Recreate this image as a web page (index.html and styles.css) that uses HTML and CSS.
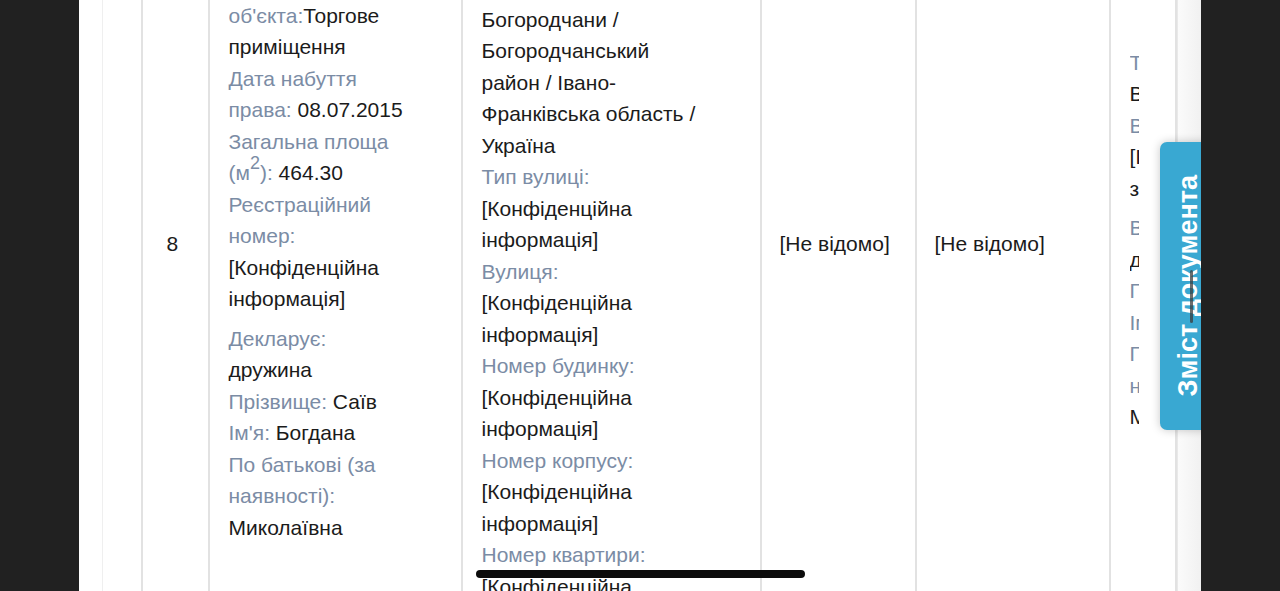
FILE: index.html
```html
<!DOCTYPE html>
<html lang="uk">
<head>
<meta charset="utf-8">
<title>Декларація — об'єкти нерухомості</title>
<link rel="stylesheet" href="styles.css">
</head>
<body>
<div class="frame">
  <div class="page">
    <div class="scroller">
      <table class="decl">
        <colgroup>
          <col class="c-gap"><col class="c-num"><col class="c-obj"><col class="c-addr"><col class="c-cost"><col class="c-cost2"><col class="c-rights">
        </colgroup>
        <tbody>
          <tr>
            <td class="gap"></td>
            <td class="num">8</td>
            <td class="obj">
              <div class="group">
                <p><span class="lbl">Об'єкт:</span> Інше</p>
                <p><span class="lbl">Тип об'єкта:</span>Торгове приміщення</p>
                <p><span class="lbl">Дата набуття права:</span> 08.07.2015</p>
                <p><span class="lbl">Загальна площа (м<sup>2</sup>):</span> 464.30</p>
                <p><span class="lbl">Реєстраційний номер:</span> [Конфіденційна інформація]</p>
              </div>
              <div class="group">
                <p><span class="lbl">Декларує:</span> дружина</p>
                <p><span class="lbl">Прізвище:</span> Саїв</p>
                <p><span class="lbl">Ім'я:</span> Богдана</p>
                <p><span class="lbl">По батькові (за наявності):</span> Миколаївна</p>
              </div>
            </td>
            <td class="addr">
              <div class="group">
                <p><span class="lbl">Поштовий індекс:</span> [Конфіденційна інформація]</p>
                <p><span class="lbl">Місцезнаходження об'єкта:</span><br>Богородчани / Богородчанський район / Івано-Франківська область / Україна</p>
                <p><span class="lbl">Тип вулиці:</span> [Конфіденційна інформація]</p>
                <p><span class="lbl">Вулиця:</span> [Конфіденційна інформація]</p>
                <p><span class="lbl">Номер будинку:</span> [Конфіденційна інформація]</p>
                <p><span class="lbl">Номер корпусу:</span> [Конфіденційна інформація]</p>
                <p><span class="lbl">Номер квартири:</span> [Конфіденційна інформація]</p>
              </div>
            </td>
            <td class="cost">[Не відомо]</td>
            <td class="cost">[Не відомо]</td>
            <td class="rights">
              <div class="clip">
                <div class="group">
                  <p class="lbl">Тип права:</p>
                  <p>Власність</p>
                  <p class="lbl">Відсоток частки:</p>
                  <p>[Інформація відсутня]</p>
                  <p>з 08.07.2015</p>
                </div>
                <div class="group">
                  <p class="lbl">Власник:</p>
                  <p>дружина</p>
                  <p><span class="lbl">Прізвище:</span> Саїв</p>
                  <p><span class="lbl">Ім'я:</span> Богдана</p>
                  <p class="lbl">По батькові (за</p>
                  <p class="lbl">наявності):</p>
                  <p>Миколаївна</p>
                </div>
              </div>
            </td>
          </tr>
        </tbody>
      </table>
    </div>
    <div class="edge-shade"></div>
    <div class="toc-tab"><span class="toc-text">Зміст документа</span></div>
    <div class="v-thumb"></div>
    <div class="h-thumb"></div>
  </div>
</div>
</body>
</html>
```

FILE: styles.css
```css
* { box-sizing: border-box; }

html, body {
  margin: 0;
  padding: 0;
  height: 591px;
  overflow: hidden;
  background: #212121;
}

.frame {
  display: flex;
  justify-content: center;
  height: 591px;
  padding-left: 79px;
  padding-right: 79px;
}

.page {
  position: relative;
  width: 1122px;
  height: 591px;
  background: #ffffff;
  overflow: hidden;
  font-family: "Liberation Sans", Arial, sans-serif;
  font-size: 21px;
  line-height: 31.5px;
  color: #1b1b1b;
}

.scroller {
  padding-left: 23px;
  margin-top: -164px;
}

.decl {
  border-collapse: collapse;
  table-layout: fixed;
  width: 1073px;
}

.c-gap { width: 39px; }
.c-num { width: 67px; }
.c-obj { width: 253px; }
.c-addr { width: 299px; }
.c-cost { width: 155px; }
.c-cost2 { width: 194px; }
.c-rights { width: 66px; }

.decl td {
  vertical-align: middle;
  padding: 10px 19px;
  border-left: 2px solid #e2e2e2;
  border-right: 2px solid #e2e2e2;
}

.decl td.gap {
  border-left: 1px solid #efefef;
  padding: 0;
}

.decl td.num {
  padding-left: 24px;
  padding-right: 8px;
}

.decl td.obj { padding-right: 52px; }
.decl td.addr { padding-right: 55px; }
.decl td.cost { padding-left: 18px; padding-right: 10px; }
.decl td.rights { padding-right: 0; }

.group { margin-bottom: 8px; }

.group p { margin: 0; }

.lbl { color: #7b8ca5; }

sup {
  font-size: 18px;
  line-height: 0;
  vertical-align: 11px;
}

.clip {
  width: 9px;
  overflow: hidden;
  white-space: nowrap;
}

.edge-shade {
  position: absolute;
  top: 0;
  right: 0;
  width: 24px;
  height: 591px;
  background: linear-gradient(to right, #fbfbfb, #f1f1f1);
  border-left: 1px solid #e9e9e9;
}

.toc-tab {
  position: absolute;
  left: 1081px;
  top: 142px;
  width: 60px;
  height: 288px;
  background: #39a8d2;
  border-radius: 7px;
  box-shadow: 0 0 10px rgba(0, 0, 0, 0.22);
  display: flex;
  align-items: center;
  padding-left: 15px;
}

.toc-text {
  writing-mode: vertical-rl;
  transform: rotate(180deg);
  color: #ffffff;
  font-family: "Liberation Sans", Arial, sans-serif;
  font-weight: bold;
  font-size: 27px;
  line-height: 27px;
  white-space: nowrap;
}

.v-thumb {
  position: absolute;
  left: 1111px;
  top: 270px;
  width: 3px;
  height: 53px;
  border-radius: 2px;
  background: rgba(60, 60, 60, 0.75);
}

.h-thumb {
  position: absolute;
  left: 397px;
  top: 570px;
  width: 329px;
  height: 8px;
  border-radius: 4px;
  background: #0c0c0c;
}
```
